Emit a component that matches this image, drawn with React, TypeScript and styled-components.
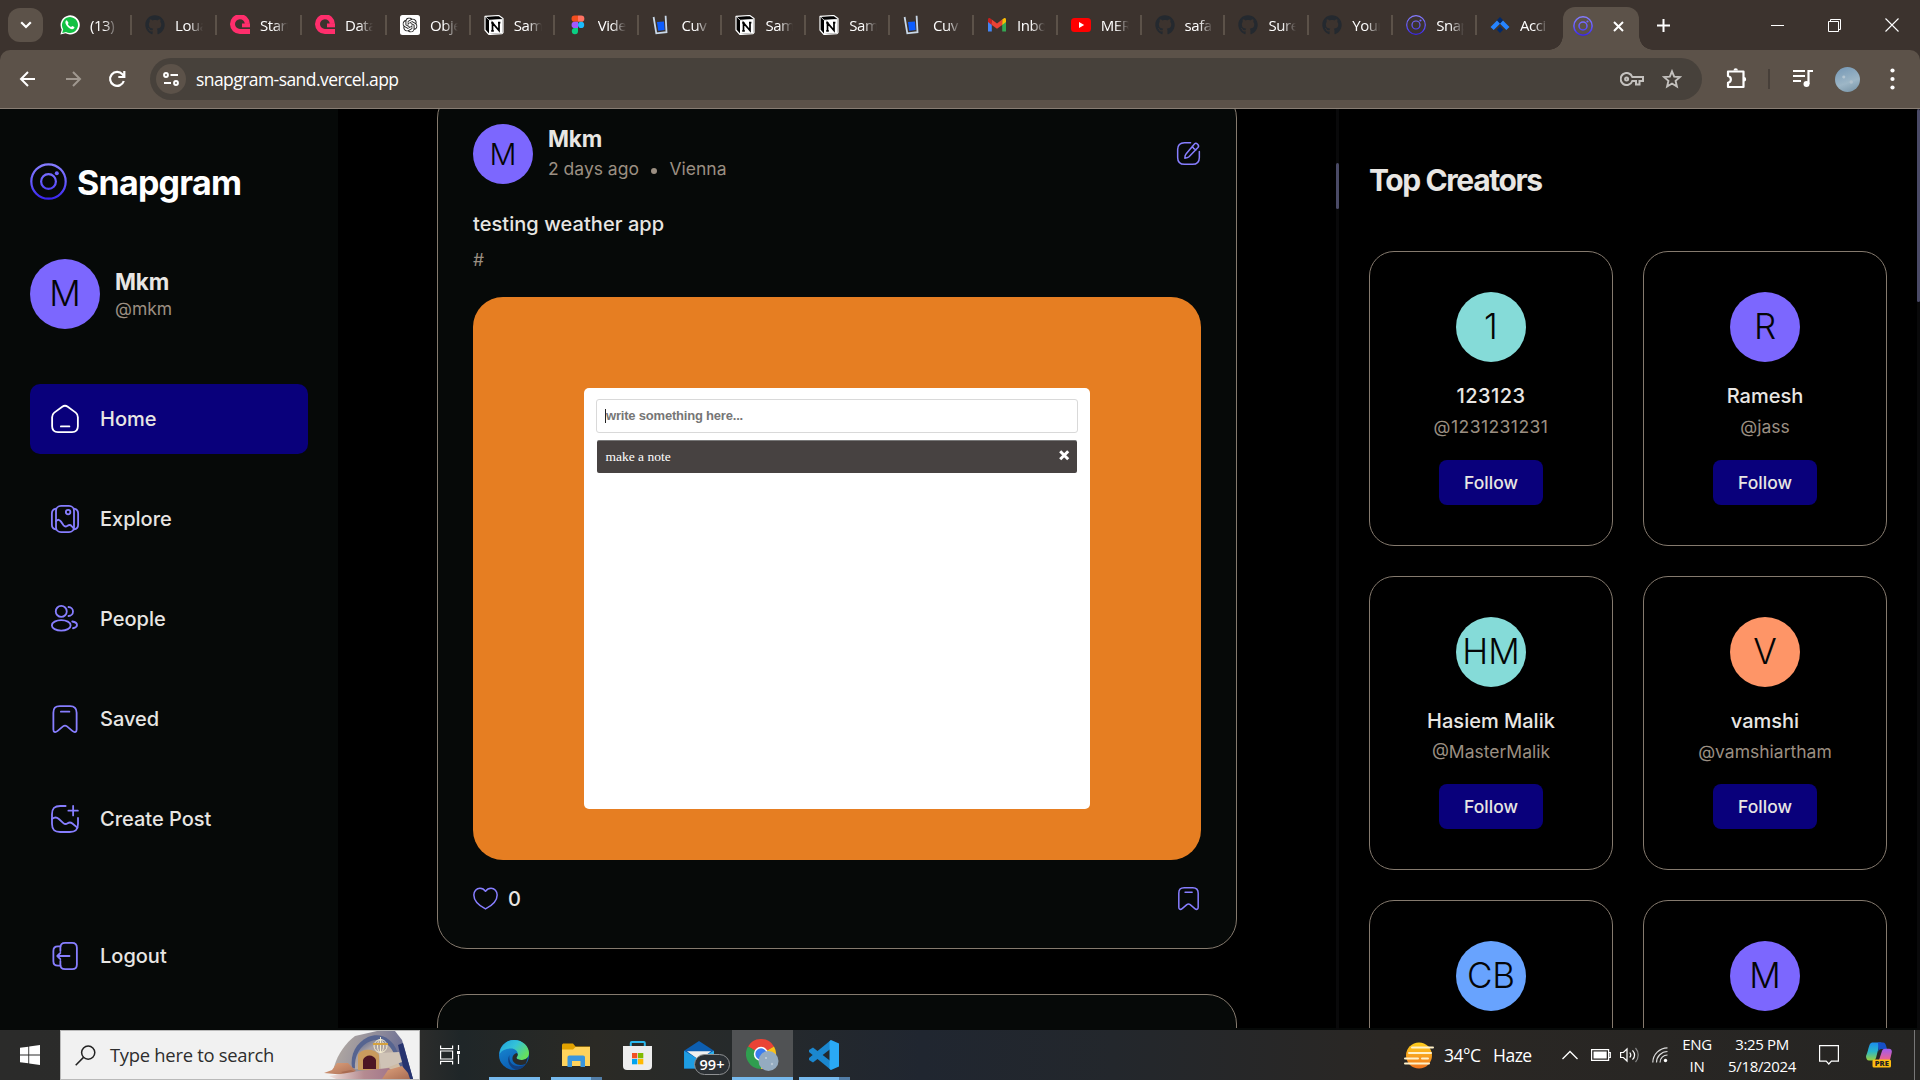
import React from "react";
import styled, { createGlobalStyle } from "styled-components";
import { FaGithub } from "react-icons/fa";
import { SiOpenai } from "react-icons/si";

const UI = `"Open Sans", "Noto Sans", sans-serif`;
const PURPLE = "#877eff";
const MUTED = "#9b8f82";
const LIGHT = "#e8e6e3";
const LINE = "#857a6e";
const PANEL = "#060908";

const Global = createGlobalStyle`
  * { box-sizing: border-box; }
  html, body { margin: 0; padding: 0; background: ${PANEL}; overflow: hidden; }
  button { border: 0; padding: 0; background: none; font: inherit; color: inherit; }
  svg { display: block; flex: none; }
`;

const Screen = styled.div`
  width: 1920px;
  height: 1080px;
  display: flex;
  flex-direction: column;
  overflow: hidden;
  background: ${PANEL};
  font-family: Inter, sans-serif;
  color: ${LIGHT};
`;

/* ---------- browser: tab strip ---------- */
const TabStrip = styled.header`
  height: 50px;
  flex: none;
  display: flex;
  background: #3c332e;
  font-family: ${UI};
  color: #fff;
`;
const TabSearch = styled.button`
  width: 35px;
  height: 34px;
  margin: 8px 4px 0 8px;
  border-radius: 12px;
  background: #5c5249;
  display: grid;
  place-items: center;
`;
const Tab = styled.div<{ $w: number; $last?: boolean }>`
  width: ${(p) => p.$w}px;
  height: 20px;
  margin-top: 15px;
  padding-left: 13px;
  display: flex;
  align-items: center;
  gap: 10px;
  border-right: 2px solid ${(p) => (p.$last ? "transparent" : "#5c5249")};
`;
const TabTitle = styled.span`
  width: 28px;
  overflow: hidden;
  white-space: nowrap;
  font-size: 15px;
  line-height: 20px;
  letter-spacing: -0.45px;
  mask-image: linear-gradient(90deg, #000 50%, transparent 100%);
`;
const ActiveTab = styled.div`
  position: relative;
  width: 76px;
  height: 43px;
  margin: 7px 0 0 2px;
  padding: 0 15px 5px 10px;
  border-radius: 12px 12px 0 0;
  background: #5c5249;
  display: flex;
  align-items: center;
  justify-content: space-between;
  &::before, &::after {
    content: "";
    position: absolute;
    bottom: 0;
    width: 14px;
    height: 14px;
  }
  &::before { left: -14px; background: radial-gradient(circle at 0 0, transparent 13.5px, #5c5249 14px); }
  &::after { right: -14px; background: radial-gradient(circle at 100% 0, transparent 13.5px, #5c5249 14px); }
`;
const NewTab = styled.div`
  width: 20px;
  margin-left: 15px;
  height: 50px;
  display: grid;
  place-items: center;
`;
const WindowButtons = styled.div`
  margin-left: auto;
  height: 50px;
  width: 171px;
  display: grid;
  grid-template-columns: 57px 57px 57px;
  align-items: center;
  justify-items: center;
`;

/* ---------- browser: toolbar ---------- */
const ToolbarWrap = styled.div`
  flex: none;
  height: 59px;
  background: #3c332e;
`;
const Toolbar = styled.div`
  height: 59px;
  background: #5c5249;
  border-bottom: 1px solid #887d73;
  border-radius: 10px 10px 0 0;
  display: flex;
  align-items: center;
  color: #fff;
`;
const NavButtons = styled.div`
  width: 150px;
  display: flex;
  align-items: center;
  gap: 20.5px;
  padding-left: 16px;
`;
const Address = styled.div`
  width: 1552px;
  height: 42px;
  border-radius: 21px;
  background: #47413b;
  display: flex;
  align-items: center;
  padding: 0 20px 0 6px;
  font-family: ${UI};
`;
const SiteInfo = styled.span`
  width: 30px;
  height: 30px;
  border-radius: 50%;
  background: #5c5249;
  display: grid;
  place-items: center;
`;
const Url = styled.span`
  margin-left: 10px;
  font-size: 17.5px;
  line-height: 24px;
  letter-spacing: -0.56px;
  flex: 1;
`;
const AddressIcons = styled.div`
  display: flex;
  align-items: center;
  gap: 18px;
  color: #c4c1be;
`;
const ToolIcons = styled.div`
  flex: 1;
  display: flex;
  align-items: center;
  padding-left: 22px;
`;
const ToolSlot = styled.span<{ $w: number }>`
  width: ${(p) => p.$w}px;
  display: flex;
`;
const ToolRule = styled.i`
  width: 2px;
  height: 20px;
  background: #473f39;
  margin-right: 22px;
`;
const ProfilePhoto = styled.span`
  width: 25px;
  height: 25px;
  border-radius: 50%;
  background: radial-gradient(circle at 65% 60%, #b0c0cc 0 5%, transparent 10%), radial-gradient(circle at 35% 40%, #b3c5d1 0 4%, transparent 9%), linear-gradient(160deg, #7397b5, #9db6c6 60%, #7390a4);
`;

/* ---------- web page ---------- */
const Page = styled.main`
  height: 921px;
  flex: none;
  display: flex;
  overflow: hidden;
`;
const Sidebar = styled.aside`
  width: 338px;
  padding: 50px 30px 0;
  display: flex;
  flex-direction: column;
  background: ${PANEL};
`;
const Brand = styled.div`
  height: 45px;
  display: flex;
  align-items: center;
  gap: 10px;
  color: #fff;
`;
const BrandName = styled.span`
  padding-top: 1px;
  font-size: 34px;
  font-weight: 650;
  letter-spacing: -0.75px;
  line-height: 45px;
`;
const Profile = styled.div`
  margin-top: 55px;
  height: 70px;
  display: flex;
  align-items: center;
  gap: 15px;
`;
const Avatar = styled.span<{ $size: number; $bg: string }>`
  width: ${(p) => p.$size}px;
  height: ${(p) => p.$size}px;
  padding-bottom: 1px;
  border-radius: 50%;
  background: ${(p) => p.$bg};
  color: #040506;
  font-size: ${(p) => p.$size * 0.5}px;
  font-weight: 350;
  line-height: 1;
  display: flex;
  align-items: center;
  justify-content: center;
  flex: none;
`;
const Identity = styled.div<{ $lift?: number }>`
  display: flex;
  flex-direction: column;
  gap: ${(p) => (p.$lift ? 3 : 0)}px;
  padding-bottom: ${(p) => p.$lift || 0}px;
`;
const StrongName = styled.b`
  font-size: 22.5px;
  line-height: 31px;
  font-weight: 700;
  letter-spacing: -0.1px;
`;
const Muted = styled.span`
  font-size: 17.5px;
  line-height: 24.5px;
  color: ${MUTED};
  display: flex;
  align-items: center;
`;
const Handle = styled(Muted)<{ $numeric: boolean }>`
  padding-top: 1px;
  letter-spacing: ${(p) => (p.$numeric ? 0.45 : 0)}px;
`;
const Tag = styled(Muted)`
  padding-top: 1px;
`;
const MetaDot = styled.i`
  width: 6px;
  height: 6px;
  border-radius: 50%;
  background: ${MUTED};
  margin: 4px 12.5px 0 12px;
`;
const Menu = styled.nav`
  margin-top: 55px;
  display: flex;
  flex-direction: column;
  gap: 30px;
`;
const MenuItem = styled.a<{ $active?: boolean }>`
  height: 70px;
  padding: 0 20px;
  border-radius: 10px;
  display: flex;
  align-items: center;
  gap: 20px;
  font-size: 20px;
  font-weight: 500;
  background: ${(p) => (p.$active ? "#09007b" : "transparent")};
  svg { color: ${(p) => (p.$active ? "#fff" : PURPLE)}; }
`;
const LogoutSlot = styled.div`
  margin-top: 67px;
`;

const Feed = styled.section`
  width: 998px;
  height: 919px;
  background: #000;
  overflow: hidden;
  display: flex;
  flex-direction: column;
  align-items: center;
  gap: 45px;
`;
const Post = styled.article<{ $first?: boolean }>`
  width: 800px;
  flex: none;
  min-height: 200px;
  margin-top: ${(p) => (p.$first ? -21 : 0)}px;
  padding: 35px;
  border: 1px solid ${LINE};
  border-radius: 30px;
  background: ${PANEL};
`;
const PostHead = styled.div`
  height: 60px;
  display: flex;
  align-items: center;
  gap: 15px;
  > svg { margin-left: auto; margin-bottom: 2px; color: ${PURPLE}; }
`;
const Caption = styled.p`
  margin: 26px 0 9px;
  font-size: 20px;
  font-weight: 500;
  line-height: 28px;
  letter-spacing: 0.06px;
`;
const Picture = styled.div`
  margin-top: 24.5px;
  height: 563px;
  border-radius: 30px;
  background: #e67e22;
  padding: 91px 111px 51px;
`;
const NotesApp = styled.div`
  height: 421px;
  border-radius: 5px;
  background: #fff;
  padding: 11px 12px;
`;
const NoteInput = styled.div`
  height: 34px;
  border: 1px solid #d9d9d9;
  border-radius: 3px;
  padding-left: 8px;
  display: flex;
  align-items: center;
  font: bold 13px/16px "Liberation Sans", Arial, sans-serif;
  letter-spacing: -0.2px;
  color: #767676;
`;
const Caret = styled.i`
  width: 1px;
  height: 14px;
  background: #222;
`;
const NoteRow = styled.div`
  height: 33px;
  margin: 7px 1px 0;
  border-radius: 2px;
  background: #474241;
  border-top: 1px solid #777;
  padding: 0 7px 0 8.5px;
  display: flex;
  align-items: center;
  justify-content: space-between;
  font: 13.5px/16px "Liberation Serif", "Times New Roman", serif;
  color: #fff;
  svg { margin-bottom: 3px; }
`;
const Stats = styled.div`
  margin-top: 24px;
  height: 29px;
  display: flex;
  align-items: center;
  gap: 10px;
  font-size: 20px;
  font-weight: 500;
  svg { color: ${PURPLE}; margin-bottom: 1px; }
  svg:last-child { margin-left: auto; }
`;

const Track = styled.div<{ $h: number }>`
  width: 3px;
  height: ${(p) => p.$h}px;
  background: #09090a;
  flex: none;
`;
const Thumb = styled.div<{ $top: number; $h: number }>`
  margin-top: ${(p) => p.$top}px;
  height: ${(p) => p.$h}px;
  border-radius: 2px;
  background: #4a4a66;
`;
const TrackClip = styled.div`
  display: flow-root;
`;
const Creators = styled.section`
  width: 578px;
  height: 919px;
  background: #000;
  padding: 50px 30px 0;
  overflow: hidden;
`;
const CreatorsTitle = styled.h3`
  margin: 0 0 50px;
  font-size: 30px;
  line-height: 42px;
  font-weight: 700;
  letter-spacing: -1.4px;
`;
const CreatorGrid = styled.div`
  display: grid;
  grid-template-columns: 244px 244px;
  gap: 30px;
`;
const CreatorCard = styled.div`
  height: 294.5px;
  border: 1px solid ${LINE};
  border-radius: 25px;
  padding-top: 40px;
  display: flex;
  flex-direction: column;
  align-items: center;
`;
const CreatorName = styled.b<{ $numeric: boolean }>`
  margin: 20px 0 4px;
  font-size: 20px;
  line-height: 28px;
  font-weight: 500;
  letter-spacing: ${(p) => (p.$numeric ? 0.45 : 0)}px;
`;
const Follow = styled.button`
  margin-top: 20px;
  width: 104px;
  height: 45px;
  border-radius: 8px;
  background: #09007b;
  font-size: 17.5px;
  font-weight: 500;
`;

/* ---------- taskbar ---------- */
const Taskbar = styled.footer`
  height: 50px;
  flex: none;
  display: flex;
  background: linear-gradient(90deg, #2b2b2a 0, #2b2c2b 22%, #1f2628 24%, #2b2a25 31%, #262a2b 38%, #202630 48%, #23272c 58%, #2a2724 72%, #262523);
  font-family: ${UI};
  color: #fff;
`;
const StartButton = styled.button`
  width: 60px;
  display: grid;
  place-items: center;
`;
const SearchBox = styled.div`
  width: 360px;
  border: 1px solid #b9b9b9;
  background: #f1f1f1;
  color: #2d2d2d;
  display: flex;
  align-items: center;
  padding-left: 14px;
  font-size: 18.4px;
  letter-spacing: -0.27px;
  svg:last-child { margin-left: auto; margin-right: 6px; }
`;
const SearchLabel = styled.span`
  margin-left: 14px;
  line-height: 24px;
`;
const AppSlot = styled.div<{ $w: number; $active?: boolean }>`
  position: relative;
  width: ${(p) => p.$w}px;
  display: grid;
  place-items: center;
  background: ${(p) => (p.$active ? "#505254" : "transparent")};
`;
const Underline = styled.i<{ $x: number; $w: number; $tail?: boolean }>`
  position: absolute;
  bottom: 0;
  left: ${(p) => p.$x}px;
  width: ${(p) => p.$w}px;
  height: 3px;
  background: ${(p) => (p.$tail ? "linear-gradient(90deg, #76b9ed calc(100% - 11px), #527da6 0)" : "#76b9ed")};
`;
const MailGlyph = styled.span`
  margin-right: 5px;
`;
const MailBadge = styled.span`
  position: absolute;
  left: 23px;
  top: 24px;
  width: 36px;
  height: 21px;
  border: 1px solid #8e9092;
  border-radius: 11px;
  background: #2b3034;
  font-size: 14.5px;
  font-weight: 600;
  line-height: 19px;
  text-align: center;
`;
const Tray = styled.div`
  margin-left: auto;
  display: flex;
  align-items: center;
`;
const TrayText = styled.span<{ $l: number; $w: number }>`
  margin-left: ${(p) => p.$l}px;
  width: ${(p) => p.$w}px;
  font-size: 17.5px;
  letter-spacing: -0.5px;
  white-space: nowrap;
`;
const TrayStack = styled.div<{ $w: number }>`
  width: ${(p) => p.$w}px;
  padding-bottom: 1px;
  display: flex;
  flex-direction: column;
  align-items: center;
  font-size: 15px;
  line-height: 22px;
  letter-spacing: -0.35px;
  white-space: nowrap;
`;
const TrayIcon = styled.span<{ $l: number }>`
  margin-left: ${(p) => p.$l}px;
`;
const DesktopEdge = styled.i`
  width: 1px;
  height: 50px;
  background: #777;
  margin: 0 5px 0 22px;
`;

/* ---------- favicons ---------- */
const SnapIcon = ({ size = 20, stroke = 2.2 }: { size?: number; stroke?: number }) => (
  <svg width={size} height={size} viewBox="0 0 37 37" fill="none">
    <defs>
      <linearGradient id={"snap" + size} x1="18" y1="0" x2="18" y2="37" gradientUnits="userSpaceOnUse">
        <stop stopColor="#877eff" />
        <stop offset=".5" stopColor="#685dff" />
        <stop offset="1" stopColor="#3621ee" />
      </linearGradient>
    </defs>
    <g stroke={`url(#snap${size})`} strokeWidth={stroke}>
      <circle cx="18.5" cy="18.5" r={18.3 - stroke / 2} />
      <circle cx="18.5" cy="18.5" r="7.4" />
    </g>
    <circle cx="26.8" cy="10.2" r="2" fill="#7166ff" />
  </svg>
);
const WhatsappIcon = () => (
  <svg width="20" height="20" viewBox="0 0 20 20">
    <path d="M.4 19.6l1.4-5A9.6 9.6 0 1 1 5.5 18.300z" fill="#fff" />
    <path d="M2.200 17.900l1-3.600a8 8 0 1 1 2.800 2.700z" fill="#12c143" />
    <path d="M7 5.400c-.5-.2-1.600.7-1.600 2.100 0 2.500 4 6.700 6.700 6.700 1.500 0 2.500-.9 2.300-2.200l-2.200-1.100-1.100 1.200c-1.600-.6-2.600-1.600-3.300-3l.8-1.100z" fill="#fff" />
  </svg>
);
const PinkIcon = () => (
  <svg width="20" height="20" viewBox="0 0 20 20">
    <path d="M17.300 8.800A7.400 7.400 0 1 0 10 16.500h10" fill="none" stroke="#ff2e6c" strokeWidth="5" />
    <path d="M12 8.500h8v3.800h-8z" fill="#ff2e6c" />
  </svg>
);
const OpenAiIcon = () => (
  <svg width="20" height="20" viewBox="0 0 20 20">
    <rect width="20" height="20" rx="2.500" fill="#fff" />
    <g transform="translate(2.500 2.500)"><SiOpenai size={15} color="#222" /></g>
  </svg>
);
const NotionIcon = () => (
  <svg width="20" height="20" viewBox="0 0 20 20">
    <path d="M1 1.400L14.800.500 19 3.400v14.200l-1 1L5 19.500 1 15z" fill="#000" stroke="#fff" strokeWidth="1.200" strokeLinejoin="round" />
    <path d="M5 5.200l13.500-.9v13.800L5 19z" fill="#fff" />
    <path d="M5 5L2 2.200M18.500 4.300L5 5.200" stroke="#fff" strokeWidth=".7" />
    <path d="M8.500 15.800V7.900l6.500 7.600V7.600M7.200 7.900h2.400M14 7.600h2.400M7.200 15.900h2.600" fill="none" stroke="#000" strokeWidth="1.700" />
  </svg>
);
const FigmaIcon = () => (
  <svg width="20" height="20" viewBox="0 0 20 20">
    <path d="M10 .5H6.700a3.100 3.100 0 0 0 0 6.300H10z" fill="#f24e1e" />
    <path d="M10 .5h3.200a3.100 3.100 0 0 1 0 6.300H10z" fill="#ff7262" />
    <path d="M10 6.800H6.700a3.100 3.100 0 0 0 0 6.300H10z" fill="#a259ff" />
    <circle cx="13.100" cy="9.900" r="3.100" fill="#1abcfe" />
    <path d="M10 13.100H6.700A3.100 3.100 0 1 0 10 16.200z" fill="#0acf83" />
  </svg>
);
const CuvIcon = () => (
  <svg width="20" height="20" viewBox="0 0 20 20">
    <path d="M5 7l7-.6.7 8.600-6.500.8z" fill="#0b5cff" />
    <path d="M1.600 2L4.300 18.300l10.200-1.200L13.600.8" fill="none" stroke="#c9d8e8" strokeWidth="1.800" />
  </svg>
);
const GmailIcon = () => (
  <svg width="20" height="20" viewBox="0 0 20 20">
    <path d="M1 5v11.500h3.800V8z" fill="#4285f4" />
    <path d="M19 5v11.500h-3.800V8z" fill="#34a853" />
    <path d="M15.200 4.500L17 3.200c1-.6 2 .1 2 1.300V7l-3.800 3z" fill="#fbbc04" />
    <path d="M4.800 4.500L3 3.200C2 2.600 1 3.300 1 4.500V7l3.800 3z" fill="#c5221f" />
    <path d="M4.800 4.500L10 8.500l5.200-4V10L10 13.800 4.800 10z" fill="#ea4335" />
  </svg>
);
const YoutubeIcon = () => (
  <svg width="20" height="20" viewBox="0 0 20 20">
    <rect y="3" width="20" height="14" rx="3.500" fill="#f00" />
    <path d="M8 7l5.200 3L8 13z" fill="#fff" />
  </svg>
);
const AcciIcon = () => (
  <svg width="20" height="20" viewBox="0 0 20 20">
    <path d="M10 2l3.200 3.200L10 8.500 6.800 5.200z M10 11.500l3.200 3.200L10 18l-3.200-3.300z" fill="#00296b" />
    <path d="M.5 12L7 5.500 10 8.700 3.700 15z M19.500 12L13 5.500 10 8.700 16.300 15z" fill="#2684ff" />
  </svg>
);
const Github = () => <FaGithub size={20} color="#24292f" />;

/* ---------- page icons, drawn on a 24-unit grid ---------- */
const Line = ({ size = 30, children }: { size?: number; children: React.ReactNode }) => (
  <svg width={size} height={size} viewBox="0 0 24 24" fill="none" stroke="currentColor" strokeWidth={1.45} strokeLinecap="round" strokeLinejoin="round">
    {children}
  </svg>
);
const HomeIcon = () => (
  <Line>
    <path d="M1.700 10.600c0-1.800.4-2.700 1.700-3.700l6.400-4.700c1.500-1.100 2.900-1.100 4.400 0l6.400 4.700c1.300 1 1.700 1.900 1.700 3.700v7.200c0 3.100-1.500 4.700-4.700 4.700H6.400c-3.200 0-4.700-1.600-4.700-4.700z" />
    <path d="M8.700 17.900h6.800" />
  </Line>
);
const ExploreIcon = () => (
  <Line>
    <rect x="4.800" y="1.500" width="14.400" height="21" rx="4" />
    <path d="M4.800 3.700C2.400 4.200 1.500 5 1.500 7.500v9c0 2.500.9 3.300 3.300 3.800M19.200 3.700c2.400.5 3.300 1.300 3.300 3.800v9c0 2.500-.9 3.300-3.300 3.800" />
    <circle cx="14.500" cy="6.500" r="1.800" />
    <path d="M4.800 13.700c1.700-1.600 2.800-1.400 4 .4l2 2.900c1 1.300 1.900 1.300 3.200.4 1.500-1 2.400-.8 3.300.3l1.700 1.900" />
  </Line>
);
const PeopleIcon = () => (
  <Line>
    <circle cx="9" cy="5.900" r="4.400" />
    <ellipse cx="9" cy="17.100" rx="7.500" ry="4.200" />
    <path d="M14.800 2.400a3.600 3.600 0 0 1 0 7.200M17.800 14c2.400.4 3.800 1.500 3.800 2.700s-1.200 2.200-3.200 2.700" />
  </Line>
);
const BookmarkIcon = ({ size = 30 }: { size?: number }) => (
  <Line size={size}>
    <path d="M2.700 7c0-3.800 1.500-5.300 5.200-5.300h8.200c3.700 0 5.200 1.500 5.200 5.300v13.300c0 2.300-1.600 2.700-3.200 1.400l-4.500-3.800c-1.200-.9-2-.9-3.200 0l-4.500 3.800c-1.600 1.300-3.200.9-3.200-1.400z" />
    <path d="M8.700 6.100h6.800" />
  </Line>
);
const CreateIcon = () => (
  <Line>
    <path d="M12.500 1.600H8.200C3.500 1.600 1.600 3.500 1.600 8.200v7.600c0 4.700 1.900 6.600 6.600 6.600h7.600c4.700 0 6.600-1.900 6.600-6.600v-4.600M18.500 1.500v7.600M14.700 5.300h7.600" />
    <path d="M1.600 12c2-1.600 3.800-1.500 5.500 0l3.600 3.300c1 .9 2.300.9 3.400.1 1.400-1 2.500-.9 3.800.2l4 3.300" />
  </Line>
);
const LogoutIcon = () => (
  <Line>
    <path d="M8.300 8V5.300c0-2.700 1.200-3.800 3.800-3.800h5.600c2.700 0 3.800 1.200 3.800 3.800v13.400c0 2.700-1.200 3.800-3.800 3.800h-5.600c-2.700 0-3.800-1.200-3.800-3.800V16" />
    <path d="M8.300 4.300h-2c-2.500 0-3.600 1.100-3.600 3.600v8.200c0 2.500 1.100 3.600 3.600 3.600h2M15.600 12H5.800M8.300 9.500L5.800 12l2.500 2.500" />
  </Line>
);
const EditIcon = () => (
  <Line size={25}>
    <path d="M14 1.600H8.200C3.500 1.600 1.600 3.500 1.600 8.200v7.600c0 4.700 1.900 6.600 6.600 6.600h7.600c4.700 0 6.600-1.900 6.600-6.600V10" />
    <path d="M17.700 2.800c1.800-1.800 5.200 1.400 3.400 3.400l-8.600 9c-1 1-2.300 1.200-4 1.300 0-1.800.2-3 1.100-4zM15.700 5c.6 1.900 1.700 3 3.500 3.500" />
  </Line>
);
const HeartIcon = () => (
  <Line size={25}>
    <path d="M12 22C9.500 20.700.8 15.700.8 8.600.8 5 3.300 2.200 6.700 2.200c2.100 0 4.100 1.100 5.300 2.900 1.200-1.800 3.200-2.900 5.300-2.900 3.400 0 5.900 2.800 5.900 6.400C23.200 15.700 14.500 20.700 12 22z" />
  </Line>
);

const tabs: [React.ComponentType, string][] = [
  [WhatsappIcon, "(13)"], [Github, "Loua"], [PinkIcon, "Start"], [PinkIcon, "Data"],
  [OpenAiIcon, "Obje"], [NotionIcon, "Sam"], [FigmaIcon, "Vide"], [CuvIcon, "Cuv"],
  [NotionIcon, "Sam"], [NotionIcon, "Sam"], [CuvIcon, "Cuv"], [GmailIcon, "Inbo"],
  [YoutubeIcon, "MER"], [Github, "safa"], [Github, "Sure"], [Github, "Your"],
  [SnapIcon, "Snap"], [AcciIcon, "Acci"],
];

const menu: [React.ComponentType, string][] = [
  [HomeIcon, "Home"], [ExploreIcon, "Explore"], [PeopleIcon, "People"],
  [BookmarkIcon, "Saved"], [CreateIcon, "Create Post"],
];

const creators = [
  { initials: "1", bg: "#85dbd8", name: "123123", handle: "@1231231231", numeric: true },
  { initials: "R", bg: "#7c67fe", name: "Ramesh", handle: "@jass", numeric: false },
  { initials: "HM", bg: "#85dbd8", name: "Hasiem Malik", handle: "@MasterMalik", numeric: false },
  { initials: "V", bg: "#fe9567", name: "vamshi", handle: "@vamshiartham", numeric: false },
  { initials: "CB", bg: "#68a3fe", name: "", handle: "", numeric: false },
  { initials: "M", bg: "#7c67fe", name: "", handle: "", numeric: false },
];

const Browser = () => (
  <>
    <TabStrip>
      <TabSearch>
        <svg width="12" height="8" viewBox="0 0 12 8" fill="none" stroke="#fff" strokeWidth="2.200"><path d="M1.200 1.200L6 6l4.800-4.800" /></svg>
      </TabSearch>
      {tabs.map(([Icon, title], i) => (
        <Tab key={i} $w={i < 4 ? 85 : 83.85} $last={i === tabs.length - 1}>
          <Icon />
          <TabTitle>{title}</TabTitle>
        </Tab>
      ))}
      <ActiveTab>
        <SnapIcon size={20.01} stroke={2.8} />
        <svg width="11" height="11" viewBox="0 0 11 11" stroke="#fff" strokeWidth="2"><path d="M1 1l9 9M10 1l-9 9" /></svg>
      </ActiveTab>
      <NewTab>
        <svg width="13" height="13" viewBox="0 0 13 13" stroke="#fff" strokeWidth="2"><path d="M6.500 0v13M0 6.500h13" /></svg>
      </NewTab>
      <WindowButtons>
        <svg width="13" height="13" viewBox="0 0 13 13" stroke="#fff"><path d="M0 6.500h13" /></svg>
        <svg width="13" height="13" viewBox="0 0 13 13" stroke="#fff" fill="none"><path d="M.5 2.500h10v10H.5zM2.500 2.500v-2h10v10h-2" /></svg>
        <svg width="14" height="14" viewBox="0 0 14 14" stroke="#fff" strokeWidth="1.100"><path d="M.5.5l13 13M13.500.5l-13 13" /></svg>
      </WindowButtons>
    </TabStrip>
    <ToolbarWrap>
      <Toolbar>
        <NavButtons>
          <svg width="24" height="24" viewBox="0 0 24 24" fill="none" stroke="#fff" strokeWidth="2"><path d="M19 12H5M12 5l-7 7 7 7" /></svg>
          <svg width="24" height="24" viewBox="0 0 24 24" fill="none" stroke="#a09890" strokeWidth="2"><path d="M5 12h14M12 5l7 7-7 7" /></svg>
          <svg width="24" height="24" viewBox="0 0 24 24" fill="none" stroke="#fff" strokeWidth="2.200"><path d="M18.800 14A7 7 0 1 1 17.500 7.400l1.500 1.800M19.300 4v6h-6" /></svg>
        </NavButtons>
        <Address>
          <SiteInfo>
            <svg width="16" height="14" viewBox="0 0 16 14" fill="none" stroke="#fff" strokeWidth="2"><circle cx="3" cy="3" r="1.900" /><path d="M7.500 3H15M1 11h7" /><circle cx="13" cy="11" r="1.900" /></svg>
          </SiteInfo>
          <Url>snapgram-sand.vercel.app</Url>
          <AddressIcons>
            <svg width="24" height="14" viewBox="0 0 24 14" fill="none" stroke="currentColor" strokeWidth="2"><path d="M12.300 5A6 6 0 1 0 12.300 9H16v3.500h3.500V9H23V5z" /><circle cx="6.600" cy="7" r="1.500" /></svg>
            <svg width="20" height="20" viewBox="0 0 20 20" fill="none" stroke="currentColor" strokeWidth="1.900"><path d="M10 2.300l2.200 5.300 5.700.5-4.300 3.800 1.300 5.600L10 14.500l-4.900 3 1.300-5.600L2.100 8.100l5.700-.5z" /></svg>
          </AddressIcons>
        </Address>
        <ToolIcons>
          <ToolSlot $w={44}>
            <svg width="24" height="24" viewBox="0 0 24 24" fill="none" stroke="#fff" strokeWidth="2.200" strokeLinejoin="round"><path d="M4 4.500h15.500V20H4v-4.200c3.800-1 3.800-5.800 0-6.800z" /><path d="M9.500 3.500a2.200 2.200 0 0 1 4.400 0M20 10a2.200 2.200 0 0 1 0 4.400" fill="#fff" stroke="none" /></svg>
          </ToolSlot>
          <ToolRule />
          <ToolSlot $w={43}>
            <svg width="22" height="20" viewBox="0 0 22 20" fill="none" stroke="#fff" strokeWidth="2"><path d="M1 2h12M1 7h12M1 12h8" /><path d="M16.500 15V2H21" strokeWidth="2.200" /><circle cx="14.500" cy="15" r="3" fill="#fff" stroke="none" /></svg>
          </ToolSlot>
          <ToolSlot $w={55}><ProfilePhoto /></ToolSlot>
          <svg width="5" height="22" viewBox="0 0 5 22" fill="#fff"><circle cx="2.500" cy="2.500" r="2.100" /><circle cx="2.500" cy="11" r="2.100" /><circle cx="2.500" cy="19.500" r="2.100" /></svg>
        </ToolIcons>
      </Toolbar>
    </ToolbarWrap>
  </>
);

const SearchArt = () => (
  <svg width="89" height="48" viewBox="0 0 89 48">
    <defs>
      <linearGradient id="arch" x1="0" x2="1" y1=".4" y2=".6"><stop stopColor="#b2a9a2" /><stop offset=".5" stopColor="#8d8a9a" /><stop offset=".85" stopColor="#6a6d94" /><stop offset="1" stopColor="#25316f" /></linearGradient>
      <linearGradient id="cave" x1="0" x2="1" y1="0" y2="1"><stop stopColor="#3d5083" /><stop offset=".3" stopColor="#a8a0a4" /><stop offset="1" stopColor="#d9c2a4" /></linearGradient>
      <linearGradient id="ground" x1="0" x2="1"><stop stopColor="#f1e2dd" /><stop offset=".5" stopColor="#b58b91" /><stop offset="1" stopColor="#9c7189" /></linearGradient>
      <linearGradient id="rock" x1="0" x2="1" y2="1"><stop stopColor="#e0a37c" /><stop offset="1" stopColor="#a86d55" /></linearGradient>
    </defs>
    <path d="M10 36C14 22 22 12 31 5L53 0h18l7 9 11 39H30z" fill="url(#arch)" />
    <path d="M74 14l5-2 10 36h-7z" fill="#26336f" />
    <path d="M28 37c-2-14 4-25 16-31 12-5 24 1 29 14l7 20z" fill="#566490" />
    <path d="M31 38c-1-13 5-24 16-28 11-4 20 4 24 15l7 14z" fill="url(#cave)" />
    <path d="M55 22l20-1 3 10-21 8z" fill="#cfc3b6" />
    <path d="M34 39V24c3-7 17-7 21 0v16z" fill="#c99b5e" />
    <path d="M39 38V29c2-6 11-6 13 0v9z" fill="#4c1524" />
    <g fill="none" stroke="#f5edcf" strokeWidth="1"><ellipse cx="56.500" cy="15" rx="6.500" ry="6.500" /><ellipse cx="56.500" cy="15" rx="3" ry="6.500" /><path d="M56.500 6v16" /></g>
    <path d="M49 13h15" stroke="#d6a23e" strokeWidth="2" />
    <path d="M0 42l8-3 5-7h11l8 8-10 4z" fill="url(#rock)" />
    <path d="M17 41l10-2 8 4-10 3z" fill="#a86a50" />
    <path d="M5 45l30-5 30-3 10 11H12z" fill="url(#ground)" />
    <path d="M58 48l6-9 14-4 6 7 2 6z" fill="url(#rock)" />
  </svg>
);

const TaskbarView = () => (
  <Taskbar>
    <StartButton>
      <svg width="20" height="20" viewBox="0 0 20 20" fill="#fff"><path d="M0 2.800l8.300-1.100v7.800H0zM9.200 1.500L20 0v9.500H9.200zM0 10.500h8.300v7.800L0 17.200zM9.200 10.500H20V20L9.200 18.500z" /></svg>
    </StartButton>
    <SearchBox>
      <svg width="21" height="21" viewBox="0 0 21 21" fill="none" stroke="#222" strokeWidth="1.500"><circle cx="13.200" cy="7.600" r="6.600" /><path d="M8.500 12.400L.7 20.200" /></svg>
      <SearchLabel>Type here to search</SearchLabel>
      <SearchArt />
    </SearchBox>
    <AppSlot $w={60}>
      <svg width="20" height="20" viewBox="0 0 20 20" fill="none" stroke="#fff" strokeWidth="1.200"><path d="M.6.5v3.200h12V.5M.6 19.500v-3.200h12v3.200M.6 6h12v8H.6zM18.500 0v5M18.500 9.500V19" /><path d="M17 6h3v3h-3z" fill="#fff" stroke="none" /></svg>
    </AppSlot>
    <AppSlot $w={68}>
      <svg width="30" height="30" viewBox="0 0 30 30">
        <defs>
          <linearGradient id="edgeTop" x1="0" x2="1" y2=".6"><stop stopColor="#1ea0dc" /><stop offset=".5" stopColor="#34c2d9" /><stop offset="1" stopColor="#66e05c" /></linearGradient>
          <linearGradient id="edgeSide" x1="0" x2=".5" y2="1"><stop stopColor="#1a90d8" /><stop offset="1" stopColor="#0a5ab0" /></linearGradient>
        </defs>
        <circle cx="15" cy="15" r="15" fill="url(#edgeSide)" />
        <path d="M1 11C3 4 9 0 15 0c9 0 15 6.500 15 13 0 5-4 7-7.500 7-3 0-5-1-5-2.200 0-.9 1.300-1.500 1.300-3.800C18.800 11 16 8.500 12 8.500 7 8.500 3 10 .5 14z" fill="url(#edgeTop)" />
        <path d="M10.500 15c-1.500 9 6 14 16 9.500-1 2-4 4.500-8 5.300C11 29 7 21 10.500 15z" fill="#123f7e" />
        <path d="M18.800 14c0 2.300-1.300 2.900-1.300 3.800 0 1.300 2 2.200 5 2.200 3 0 5-1 6.500-3-1 3-1.500 5-2.500 7-7 3-14-1-13-6.500.3-2 2-3.800 4-4.500z" fill="#2a2a29" />
      </svg>
      <Underline $x={9} $w={51} />
    </AppSlot>
    <AppSlot $w={56}>
      <svg width="28" height="24" viewBox="0 0 28 24"><path d="M0 2.500C0 1 .7.500 2 .500h9l2.500 3H28V12H0z" fill="#e2a200" /><path d="M0 6.500h11l2.500-2.500H28v19H0z" fill="#ffd35c" /><path d="M5.500 24V14.500c0-1.200.6-2 2-2h13.500c1.400 0 2 .8 2 2V24h-4.500v-6h-8.500v6z" fill="#3a96dd" /></svg>
      <Underline $x={3} $w={51} $tail />
    </AppSlot>
    <AppSlot $w={67}>
      <svg width="29" height="29" viewBox="0 0 29 29"><path d="M7.800 6V2c0-.7.300-1 1-1h12c.6 0 1 .4 1 1v4" fill="none" stroke="#2bb8ee" strokeWidth="2" /><path d="M0 5h29v20a4 4 0 0 1-4 4H4a4 4 0 0 1-4-4z" fill="#ededed" /><path d="M9 12h5.300v5.300H9z" fill="#f25022" /><path d="M15 12h5.300v5.300H15z" fill="#7fba00" /><path d="M9 18h5.300v5.300H9z" fill="#00a4ef" /><path d="M15 18h5.300v5.300H15z" fill="#ffb900" /></svg>
    </AppSlot>
    <AppSlot $w={61}>
      <MailGlyph>
        <svg width="30" height="28" viewBox="0 0 31 29"><path d="M0 10L15.500 0 31 10v18.500H0z" fill="#0d5eb0" /><path d="M3 10.500h25L16 20z" fill="#f0f0f0" /><path d="M0 10l31 18.500H0z" fill="#1e9de3" /><path d="M31 10L14 20l17 8.500z" fill="#32b4ee" /></svg>
      </MailGlyph>
      <MailBadge>99+</MailBadge>
    </AppSlot>
    <AppSlot $w={61} $active>
      <svg width="33" height="32" viewBox="0 0 33 32">
        <path d="M15 15L2 7.500A15 15 0 0 1 28 7.500z" fill="#ea4335" />
        <path d="M15 15L28 7.500A15 15 0 0 1 15 30z" fill="#fbc116" />
        <path d="M15 15v15A15 15 0 0 1 2 7.500z" fill="#2f9e4f" />
        <circle cx="15" cy="15" r="7.200" fill="#fff" /><circle cx="15" cy="15" r="5.700" fill="#3a7df0" />
        <circle cx="22.500" cy="22" r="10" fill="#94abc0" /><circle cx="20" cy="19" r="1" fill="#c5d2dc" /><circle cx="26" cy="25" r="1.200" fill="#b9c8d4" />
      </svg>
      <Underline $x={0} $w={61} />
    </AppSlot>
    <AppSlot $w={62}>
      <svg width="30" height="30" viewBox="0 0 30 30"><path d="M22 0v8.500L4 22.500 0 20v-2z" fill="#1b87cf" /><path d="M22 30v-8.500L4 7.500 0 10v2z" fill="#1b87cf" /><path d="M22 0l8 3.500v23L22 30l-1.500-1.200V1.200z" fill="#2aa9f5" /></svg>
      <Underline $x={6} $w={51} $tail />
    </AppSlot>
    <Tray>
      <svg width="30" height="27" viewBox="0 0 30 27">
        <defs><linearGradient id="sun" x2="0" y2="1"><stop stopColor="#ffcf1c" /><stop offset="1" stopColor="#f07420" /></linearGradient></defs>
        <circle cx="15" cy="13.500" r="13" fill="url(#sun)" />
        <g stroke="#fff1c9" strokeWidth="2" strokeLinecap="round"><path d="M8 5.500h21M5 11h22M1 16.500h13M18 16.500h6M1 21.500h24" /></g>
      </svg>
      <TrayText $l={10} $w={49}>34°C</TrayText>
      <TrayText $l={0} $w={69}>Haze</TrayText>
      <svg width="16" height="10" viewBox="0 0 16 10" fill="none" stroke="#fff" strokeWidth="1.300"><path d="M.5 9L8 1.500 15.500 9" /></svg>
      <TrayIcon $l={13}><svg width="20" height="12" viewBox="0 0 20 12" fill="none" stroke="#fff" strokeWidth="1.200"><path d="M.6.6h17v10.800H.6zM18 3.500h1.300v5H18" /><path d="M2.500 2.500h13.200v7H2.500z" fill="#fff" stroke="none" /></svg></TrayIcon>
      <TrayIcon $l={9}><svg width="21" height="18" viewBox="0 0 21 18" fill="none" stroke="#fff" strokeWidth="1.200"><path d="M.6 6.500h2.800L7 3v12l-3.600-3.500H.6z" /><path d="M9.800 6.500c1.200 1.500 1.200 3.500 0 5M12.500 4.300c2.500 2.800 2.500 6.600 0 9.400" /><path d="M15.500 2c3.600 4 3.600 10 0 14" stroke="#888" /></svg></TrayIcon>
      <TrayIcon $l={11}><svg width="16" height="16" viewBox="0 0 16 16" fill="none" stroke="#ddd" strokeWidth="1.200"><path d="M.8 15.500A15 15 0 0 1 15.500.8M4.500 15.500a11 11 0 0 1 11-11M8 15.500a7.500 7.500 0 0 1 7.500-7.500" /><circle cx="13.500" cy="13.500" r="1.700" fill="#fff" stroke="none" /></svg></TrayIcon>
      <TrayStack $w={58}><span>ENG</span><span>IN</span></TrayStack>
      <TrayStack $w={72}><span>3:25 PM</span><span>5/18/2024</span></TrayStack>
      <TrayIcon $l={21}><svg width="20" height="20" viewBox="0 0 20 20" fill="none" stroke="#fff" strokeWidth="1.200"><path d="M.6.6h18.800v15.600h-7L9.800 19l-2.600-2.800H.6z" /></svg></TrayIcon>
      <TrayIcon $l={27}>
        <svg width="26" height="26" viewBox="0 0 26 26">
          <defs>
            <linearGradient id="copA" x2="0" y2="1"><stop stopColor="#1b8cf0" /><stop offset=".5" stopColor="#29b7c8" /><stop offset="1" stopColor="#9bd03c" /></linearGradient>
            <linearGradient id="copB" x2="0" y2="1"><stop stopColor="#a05cf0" /><stop offset="1" stopColor="#f0628a" /></linearGradient>
          </defs>
          <path d="M0 14c1.500-3 2-7 3.500-11C4.300 1 5.500.5 7.500.500H17c-3 0-3.500 2-4.500 5.500L10 16c-.8 2-2 2.500-4 2.500H3C1 18.500 0 16.500 0 14z" fill="url(#copA)" />
          <path d="M12 .5h5c2 0 2.500 1.500 3 3l1 3.500h-5.500c-2 0-2.500 1-3 3z" fill="#1650c8" />
          <path d="M13 18l3-9c.6-1.600 1.500-2.300 3-2.300h4c2.300 0 3.300 2 2.700 4L24 18z" fill="url(#copB)" />
          <rect x="6.500" y="17.500" width="18.500" height="8" rx="1.500" fill="#fdbc12" />
          <text x="15.800" y="24.300" textAnchor="middle" fontFamily="Open Sans" fontWeight="800" fontSize="7.600" fill="#222">PRE</text>
        </svg>
      </TrayIcon>
      <DesktopEdge />
    </Tray>
  </Taskbar>
);

export default function App() {
  return (
    <Screen>
      <Global />
      <Browser />
      <Page>
        <Sidebar>
          <Brand><SnapIcon size={37} /><BrandName>Snapgram</BrandName></Brand>
          <Profile>
            <Avatar $size={70} $bg="#7c67fe">M</Avatar>
            <Identity><StrongName>Mkm</StrongName><Muted>@mkm</Muted></Identity>
          </Profile>
          <Menu>
            {menu.map(([Icon, label]) => (
              <MenuItem key={label} $active={label === "Home"}><Icon />{label}</MenuItem>
            ))}
          </Menu>
          <LogoutSlot><MenuItem><LogoutIcon />Logout</MenuItem></LogoutSlot>
        </Sidebar>
        <Feed>
          <Post $first>
            <PostHead>
              <Avatar $size={60} $bg="#7c67fe">M</Avatar>
              <Identity $lift={4}>
                <StrongName>Mkm</StrongName>
                <Muted>2 days ago<MetaDot />Vienna</Muted>
              </Identity>
              <EditIcon />
            </PostHead>
            <Caption>testing weather app</Caption>
            <Tag>#</Tag>
            <Picture>
              <NotesApp>
                <NoteInput><Caret />write something here...</NoteInput>
                <NoteRow>
                  make a note
                  <svg width="11" height="11" viewBox="0 0 11 11" stroke="#fff" strokeWidth="3"><path d="M1.200 1.200l8 8M9.200 1.200l-8 8" /></svg>
                </NoteRow>
              </NotesApp>
            </Picture>
            <Stats><HeartIcon />0<BookmarkIcon size={25} /></Stats>
          </Post>
          <Post />
        </Feed>
        <Track $h={921}><TrackClip><Thumb $top={54} $h={46} /></TrackClip></Track>
        <Creators>
          <CreatorsTitle>Top Creators</CreatorsTitle>
          <CreatorGrid>
            {creators.map((c, i) => (
              <CreatorCard key={i}>
                <Avatar $size={70} $bg={c.bg}>{c.initials}</Avatar>
                {c.name && (
                  <>
                    <CreatorName $numeric={c.numeric}>{c.name}</CreatorName>
                    <Handle $numeric={c.numeric}>{c.handle}</Handle>
                    <Follow>Follow</Follow>
                  </>
                )}
              </CreatorCard>
            ))}
          </CreatorGrid>
        </Creators>
        <Track $h={921}><Thumb $top={0} $h={193} /></Track>
      </Page>
      <TaskbarView />
    </Screen>
  );
}
